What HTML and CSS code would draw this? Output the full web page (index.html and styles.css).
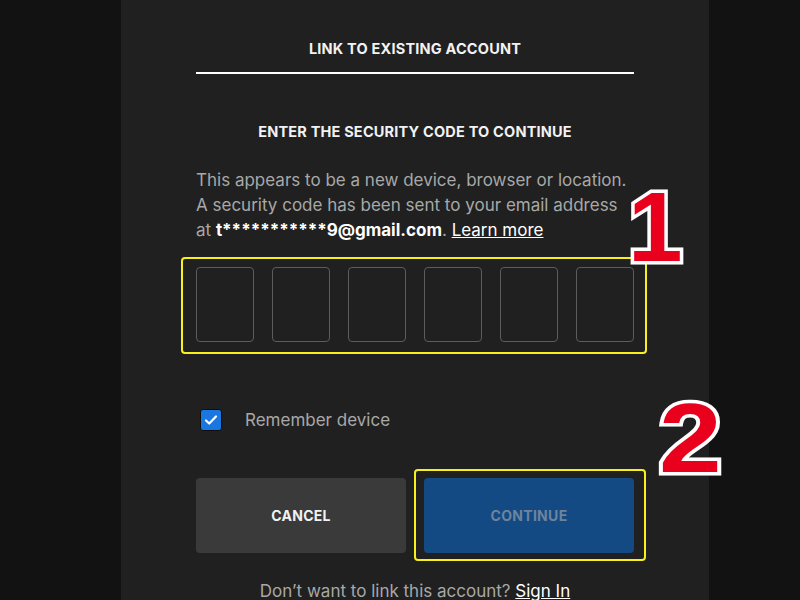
FILE: index.html
```html
<!DOCTYPE html>
<html lang="en">
<head>
    <meta charset="UTF-8">
    <meta name="viewport" content="width=device-width, initial-scale=1.0">
    <title>Link to existing account</title>
    <link rel="stylesheet" href="styles.css">
</head>
<body>
    <div class="panel">
        <h1 class="title">LINK TO EXISTING ACCOUNT</h1>

        <h2 class="subtitle">ENTER THE SECURITY CODE TO CONTINUE</h2>

        <p class="info">This appears to be a new device, browser or location. A security code has been sent to your email address at <b>t***********9@gmail.com</b>. <a href="#">Learn more</a></p>

        <div class="code-row marked">
            <input class="code-box" maxlength="1">
            <input class="code-box" maxlength="1">
            <input class="code-box" maxlength="1">
            <input class="code-box" maxlength="1">
            <input class="code-box" maxlength="1">
            <input class="code-box" maxlength="1">
        </div>

        <label class="remember">
            <span class="check">
                <svg width="14" height="14" viewBox="0 0 14 14"><path d="M2 7.5l3.2 3L12 3.5" fill="none" stroke="#fff" stroke-width="2.2" stroke-linecap="round" stroke-linejoin="round"/></svg>
            </span>
            Remember device
        </label>

        <div class="buttons">
            <button class="btn btn-cancel">CANCEL</button>
            <button class="btn btn-continue marked">CONTINUE</button>
        </div>

        <p class="footer">Don’t want to link this account? <a href="#">Sign In</a></p>
    </div>

    <span class="step step-one">1</span>
    <span class="step step-two">2</span>
</body>
</html>
```

FILE: styles.css
```css
body {
    margin: 0;
    background-color: #121212;
    font-family: Inter, "Open Sans", sans-serif;
    overflow: hidden;
    height: 600px;
    position: relative;
}

.panel {
    margin-left: 121px;
    width: 588px;
    height: 600px;
    padding: 40px 75px 0;
    box-sizing: border-box;
    background-color: #202020;
    color: #a8a8a8;
}

.title {
    margin: 0;
    padding-bottom: 14px;
    border-bottom: 2px solid #fff;
    color: #f2f2f2;
    font-size: 14.5px;
    line-height: 18px;
    font-weight: 700;
    text-align: center;
    letter-spacing: 0.2px;
}

.subtitle {
    margin: 49px 0 0;
    color: #f2f2f2;
    font-size: 14.5px;
    line-height: 18px;
    font-weight: 700;
    text-align: center;
    letter-spacing: 0.2px;
}

.info {
    margin: 27px 0 0;
    font-size: 17px;
    line-height: 25px;
}

.info b {
    color: #fff;
}

.info a,
.footer a {
    color: #fff;
    text-decoration: underline;
}

.code-row {
    display: flex;
    justify-content: space-between;
    margin-top: 24px;
}

.code-box {
    width: 58px;
    height: 75px;
    box-sizing: border-box;
    border: 1px solid #5c5c5c;
    border-radius: 4px;
    background: transparent;
}

/* yellow highlight frames from the screenshot */
.marked {
    position: relative;
}

.code-row.marked::after {
    content: "";
    position: absolute;
    top: -10px;
    bottom: -12px;
    left: -15px;
    right: -13px;
    border: 2px solid #f5f01e;
    border-radius: 4px;
}

.btn-continue.marked::after {
    content: "";
    position: absolute;
    top: -9px;
    bottom: -8px;
    left: -10px;
    right: -12px;
    border: 2px solid #f5f01e;
    border-radius: 4px;
}

.remember {
    display: flex;
    align-items: center;
    gap: 23px;
    margin: 66px 0 0 4px;
    font-size: 17px;
    line-height: 24px;
}

.check {
    display: flex;
    align-items: center;
    justify-content: center;
    width: 22px;
    height: 22px;
    box-sizing: border-box;
    border: 1px solid #0d0d0d;
    border-radius: 3px;
    background-color: #1a77e0;
}

.buttons {
    display: flex;
    gap: 18px;
    margin-top: 46px;
}

.btn {
    width: 210px;
    height: 75px;
    border: none;
    border-radius: 4px;
    font-family: Inter, "Open Sans", sans-serif;
    font-size: 14px;
    font-weight: 700;
    letter-spacing: 0.3px;
}

.btn-cancel {
    background-color: #3a3a3a;
    color: #f2f2f2;
}

.btn-continue {
    background-color: #134a84;
    color: #6e849c;
}

.footer {
    margin: 26px 0 0;
    text-align: center;
    font-size: 17px;
    line-height: 24px;
}

.step {
    position: absolute;
    font-family: "Liberation Sans", sans-serif;
    font-weight: 700;
    font-size: 98px;
    line-height: 1;
    color: #e8001c;
    -webkit-text-stroke: 7px #fff;
    paint-order: stroke fill;
    transform-origin: left top;
}

.step-one {
    left: 628px;
    top: 178px;
}

.step-two {
    left: 659px;
    top: 389px;
    transform: scaleX(1.15);
}
```
